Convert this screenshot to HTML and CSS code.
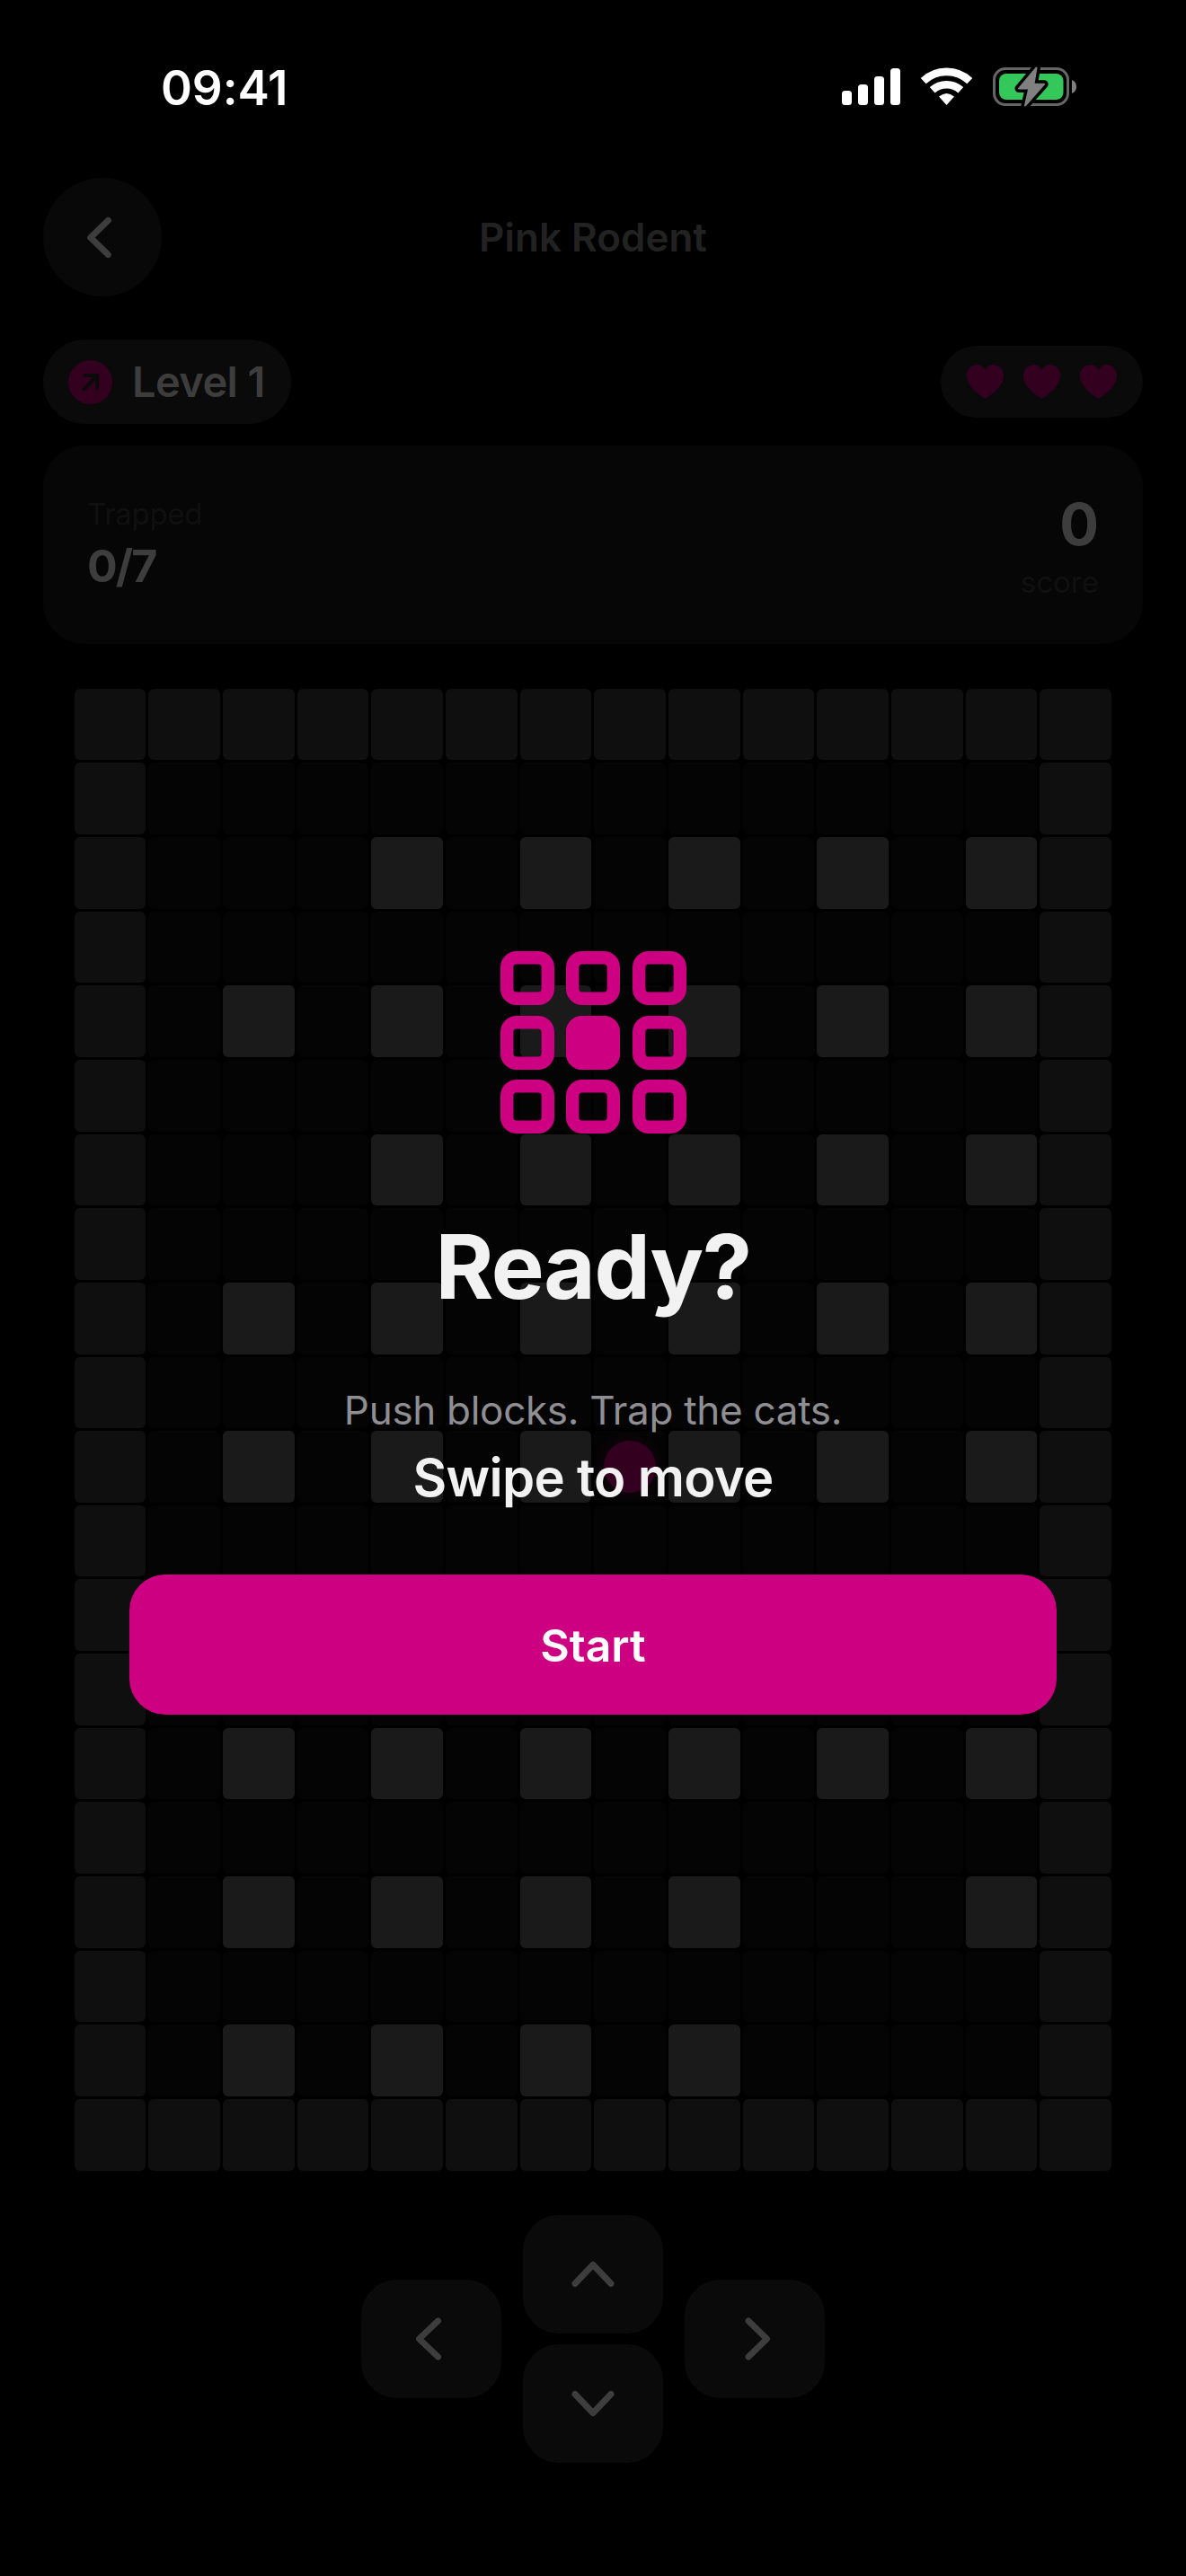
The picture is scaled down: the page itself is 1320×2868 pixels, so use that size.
FILE: index.html
```html
<!DOCTYPE html>
<html lang="en">
<head>
<meta charset="utf-8">
<title>Pink Rodent</title>
<link rel="stylesheet" href="styles.css">
</head>
<body>
<div class="screen">
  <div class="status">
    <span class="time">09:41</span>
    <svg class="status-icons" width="264" height="48" viewBox="936 72 264 48">
      <g fill="#fff">
        <rect x="937" y="101" width="11" height="16" rx="3.5"/>
        <rect x="955" y="94" width="11" height="23" rx="3.5"/>
        <rect x="973" y="85" width="11" height="32" rx="3.5"/>
        <rect x="991" y="76" width="11" height="41" rx="3.5"/>
        <path d="M1053.5 117 L1045 107.6 Q1053.5 100.4 1062 107.6 Z"/>
      </g>
      <g fill="none" stroke="#fff" stroke-width="8.6">
        <path d="M1037.7 100.3 A23.5 23.5 0 0 1 1069.3 100.3"/>
        <path d="M1027.7 90.2 A37.5 37.5 0 0 1 1079.3 90.2"/>
      </g>
      <rect x="1106.5" y="76.5" width="82" height="40" rx="12.5" fill="none" stroke="#666" stroke-width="3"/>
      <rect x="1112" y="82" width="71.5" height="29" rx="8" fill="#34c759"/>
      <path d="M1193 89 Q1198 91 1198 96.5 Q1198 102 1193 104 Z" fill="#808080"/>
      <path class="bolt" d="M1153.5 75.5 L1134 98.6 H1145.2 L1141 117.5 L1162.2 93.7 H1150.5 Z"/>
      <path d="M1153.5 75.5 L1134 98.6 H1145.2 L1141 117.5 L1162.2 93.7 H1150.5 Z" fill="#808080" stroke="#808080" stroke-width="2" stroke-linejoin="round"/>
    </svg>
  </div>

  <div class="nav">
    <div class="back"><svg width="34" height="52" viewBox="0 0 34 52"><path class="chev" d="M27.3 7.5 L7.8 26.5 L27.3 45.5"/></svg></div>
    <div class="title">Pink Rodent</div>
  </div>

  <div class="info">
    <div class="level">
      <svg width="49" height="49" viewBox="0 0 49 49"><circle cx="24.5" cy="24.5" r="24.5" fill="#330020"/><path d="M18.5 17 H32.2 V31 M31 18.5 L17.5 32.2" fill="none" stroke="#0a0a0a" stroke-width="4.2" stroke-linecap="round" stroke-linejoin="round"/></svg>
      <span>Level 1</span>
    </div>
    <div class="lives">
      <svg class="heart" viewBox="0 0 41 38"><path d="M20.5 38 C17 36 0 25 0 12.5 C0 5 5 0 11.3 0 C15.5 0 18.8 2.3 20.5 6 C22.2 2.3 25.5 0 29.7 0 C36 0 41 5 41 12.5 C41 25 24 36 20.5 38 Z"/></svg>
      <svg class="heart" viewBox="0 0 41 38"><path d="M20.5 38 C17 36 0 25 0 12.5 C0 5 5 0 11.3 0 C15.5 0 18.8 2.3 20.5 6 C22.2 2.3 25.5 0 29.7 0 C36 0 41 5 41 12.5 C41 25 24 36 20.5 38 Z"/></svg>
      <svg class="heart" viewBox="0 0 41 38"><path d="M20.5 38 C17 36 0 25 0 12.5 C0 5 5 0 11.3 0 C15.5 0 18.8 2.3 20.5 6 C22.2 2.3 25.5 0 29.7 0 C36 0 41 5 41 12.5 C41 25 24 36 20.5 38 Z"/></svg>
    </div>
  </div>

  <div class="card">
    <div class="stat">
      <div class="label">Trapped</div>
      <div class="count">0/7</div>
    </div>
    <div class="stat right">
      <div class="points">0</div>
      <div class="label">score</div>
    </div>
  </div>

  <div class="board" id="board"></div>

  <div class="pad">
    <div class="key"><svg width="34" height="52" viewBox="0 0 34 52"><path class="chev" d="M24.5 6 L3.5 26 L24.5 46"/></svg></div>
    <div class="pad-mid">
      <div class="key"><svg width="54" height="34" viewBox="0 0 54 34"><path class="chev" d="M7 27.5 L27 6.5 L47 27.5"/></svg></div>
      <div class="key"><svg width="54" height="34" viewBox="0 0 54 34"><path class="chev" d="M7 6.5 L27 27.5 L47 6.5"/></svg></div>
    </div>
    <div class="key"><svg width="34" height="52" viewBox="0 0 34 52"><path class="chev" d="M10 6 L30.5 26 L10 46"/></svg></div>
  </div>

  <div class="overlay">
    <div class="logo"><i></i><i></i><i></i><i></i><i class="on"></i><i></i><i></i><i></i><i></i></div>
    <div class="ready">Ready?</div>
    <div class="tagline">Push blocks. Trap the cats.</div>
    <div class="swipe">Swipe to move</div>
    <div class="start">Start</div>
  </div>
</div>
<script src="board.js"></script>
</body>
</html>
```
FILE: styles.css
```css
* { box-sizing: border-box; }
body { margin: 0; background: #000; }
.screen {
  position: relative;
  width: 1320px;
  height: 2868px;
  overflow: hidden;
  background: #000;
  font-family: Inter, "Liberation Sans", sans-serif;
  display: flex;
  flex-direction: column;
  white-space: nowrap;
}
svg { display: block; flex: none; }
.status {
  display: flex;
  justify-content: space-between;
  height: 198px;
  padding: 72px 120px 0 179px;
}
.time { color: #fff; font-size: 53px; font-weight: 600; line-height: 52px; letter-spacing: -0.1px; }
.bolt { fill: #000; stroke: #000; stroke-width: 9px; stroke-linejoin: round; }
.nav {
  display: grid;
  grid-template-columns: 132px 1fr 132px;
  align-items: center;
  height: 132px;
  padding: 0 48px;
}
.back {
  display: flex;
  align-items: center;
  justify-content: center;
  width: 132px;
  height: 132px;
  padding-right: 9px;
  border-radius: 50%;
  background: #080808;
}
.chev { fill: none; stroke: #3d3d3d; stroke-width: 7px; stroke-linecap: round; stroke-linejoin: round; }
.title { text-align: center; color: #222; font-size: 44px; font-weight: 600; line-height: 54px; }
.info {
  display: flex;
  align-items: center;
  justify-content: space-between;
  height: 94px;
  margin: 48px 48px 24px;
}
.level {
  display: flex;
  align-items: center;
  gap: 22px;
  width: 276px;
  height: 94px;
  padding-left: 28px;
  border-radius: 47px;
  background: #0a0a0a;
  color: #3d3d3d;
  font-size: 47px;
  font-weight: 600;
  line-height: 56px;
  letter-spacing: -0.6px;
}
.lives {
  display: flex;
  align-items: center;
  justify-content: center;
  gap: 22px;
  width: 225px;
  height: 80px;
  border-radius: 40px;
  background: #0a0a0a;
}
.heart { width: 41px; height: 38px; fill: #330020; }
.card {
  display: flex;
  justify-content: space-between;
  height: 221px;
  margin: 0 48px;
  padding: 48px 49px 0;
  border-radius: 46px;
  background: #060606;
}
.label { color: #101010; font-size: 33px; line-height: 40px; letter-spacing: -0.3px; }
.count { color: #3d3d3d; font-size: 50px; font-weight: 700; line-height: 60px; letter-spacing: -2px; }
.stat { padding-top: 8px; }
.stat .count { margin-top: 8px; }
.stat.right { padding-top: 0; text-align: right; }
.points { color: #3d3d3d; font-size: 65px; font-weight: 700; line-height: 80px; }
.right .label { margin-top: 4px; letter-spacing: 0; }
.board {
  display: grid;
  grid-template-columns: repeat(14, 79.67px);
  grid-auto-rows: 79.67px;
  gap: 3px;
  margin: 49.6px 0 0 82.7px;
}
.cell { border-radius: 6px; background: #040404; }
.wall { background: #0f0f0f; }
.block { background: #1a1a1a; }
.home { display: flex; align-items: center; justify-content: center; }
.player {
  width: 58px;
  height: 58px;
  border-radius: 50%;
  background: #330020;
  box-shadow: 0 0 18px rgba(51, 0, 32, 0.4);
}
.pad {
  display: flex;
  align-items: center;
  justify-content: center;
  gap: 24px;
  margin-top: 49px;
}
.pad-mid { display: flex; flex-direction: column; gap: 12px; }
.key {
  display: flex;
  align-items: center;
  justify-content: center;
  width: 156px;
  height: 132px;
  border-radius: 40px;
  background: #0a0a0a;
}
.overlay {
  position: absolute;
  inset: 0;
  display: flex;
  flex-direction: column;
  align-items: center;
  padding-top: 1059px;
}
.logo { display: grid; grid-template-columns: repeat(3, 60px); grid-auto-rows: 60px; gap: 11.5px 13.5px; }
.logo i { border-radius: 18px; box-shadow: inset 0 0 0 14.4px #ce0082; }
.logo .on { background: #ce0082; }
.ready { margin-top: 88px; color: #f2f2f2; font-size: 99px; font-weight: 700; line-height: 120px; letter-spacing: -1.4px; }
.tagline { margin-top: 72px; color: #8e8e93; font-size: 44px; line-height: 56px; letter-spacing: -0.3px; }
.swipe { margin-top: 11px; color: #f2f2f2; font-size: 58px; font-weight: 600; line-height: 72px; letter-spacing: -0.7px; }
.start {
  width: 1032px;
  height: 156px;
  margin-top: 72px;
  border-radius: 40px;
  background: #ce0082;
  color: #fff;
  font-size: 50px;
  font-weight: 600;
  line-height: 158px;
  text-align: center;
}
```
FILE: board.js
```js
// # wall, o block, @ player, . floor
const rows = [
  "##############",
  "#............#",
  "#...o.o.o.o.o#",
  "#............#",
  "#.o.o.o.o.o.o#",
  "#............#",
  "#...o.o.o.o.o#",
  "#............#",
  "#.o.o.o.o.o.o#",
  "#............#",
  "#.o.o.o@o.o.o#",
  "#............#",
  "#............#",
  "#............#",
  "#.o.o.o.o.o.o#",
  "#............#",
  "#.o.o.o.o...o#",
  "#............#",
  "#.o.o.o.o....#",
  "##############"
];
const kinds = { "#": "cell wall", "o": "cell block", "@": "cell home", ".": "cell" };
const board = document.getElementById("board");
for (const ch of rows.join("")) {
  const cell = document.createElement("div");
  cell.className = kinds[ch];
  if (ch === "@") {
    const player = document.createElement("div");
    player.className = "player";
    cell.appendChild(player);
  }
  board.appendChild(cell);
}
```
